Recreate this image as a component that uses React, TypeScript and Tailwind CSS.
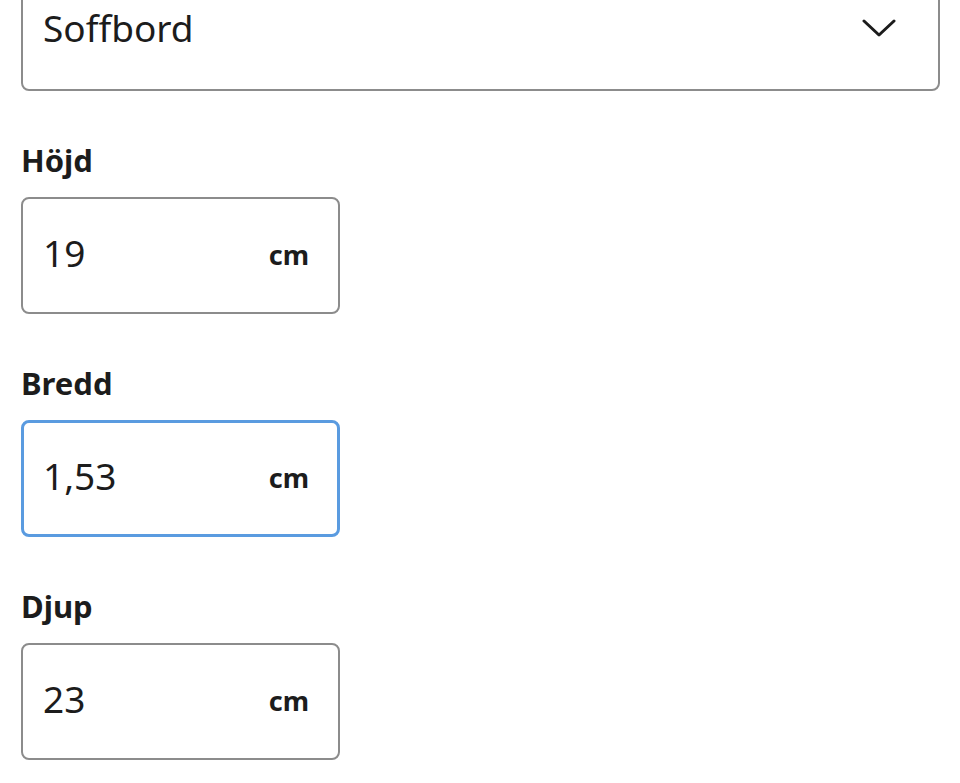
import React from "react";

function Field({ label, value, focused }: { label: string; value: string; focused?: boolean }) {
  return (
    <div className="flex flex-col">
      <div className="text-[31px] leading-[40px] font-bold text-[#1c1c1c] h-[40px]">{label}</div>
      <div
        className={
          focused
            ? "mt-[17px] w-[319px] h-[117px] rounded-[8px] border-[3px] border-[#5a9be0] flex items-center justify-between pl-[19px] pr-[28px]"
            : "mt-[17px] w-[319px] h-[117px] rounded-[8px] border-[2px] border-[#8c8c8c] flex items-center justify-between pl-[20px] pr-[29px]"
        }
      >
        <span className="text-[37px] text-[#1c1c1c] pb-[6px]">{value}</span>
        <span className="text-[27px] font-bold text-[#1c1c1c]">cm</span>
      </div>
    </div>
  );
}

export default function App() {
  return (
    <div className="w-[960px] h-[783px] overflow-hidden bg-white" style={{ fontFamily: '"Noto Sans", sans-serif' }}>
      <div className="px-[21px] -mt-[26px] flex flex-col">
        <div className="w-[919px] h-[117px] rounded-[8px] border-[2px] border-[#8c8c8c] flex items-center justify-between pl-[20px] pr-[42px] pb-[10px]">
          <span className="text-[37px] text-[#1c1c1c]">Soffbord</span>
          <svg width="34" height="20" viewBox="0 0 34 20" fill="none">
            <path d="M2 3 L17 17 L32 3" stroke="#1c1c1c" strokeWidth="3" strokeLinecap="round" strokeLinejoin="round" />
          </svg>
        </div>
        <div className="mt-[49px] flex flex-col gap-[49px]">
          <Field label="Höjd" value="19" />
          <Field label="Bredd" value="1,53" focused />
          <Field label="Djup" value="23" />
        </div>
      </div>
    </div>
  );
}
